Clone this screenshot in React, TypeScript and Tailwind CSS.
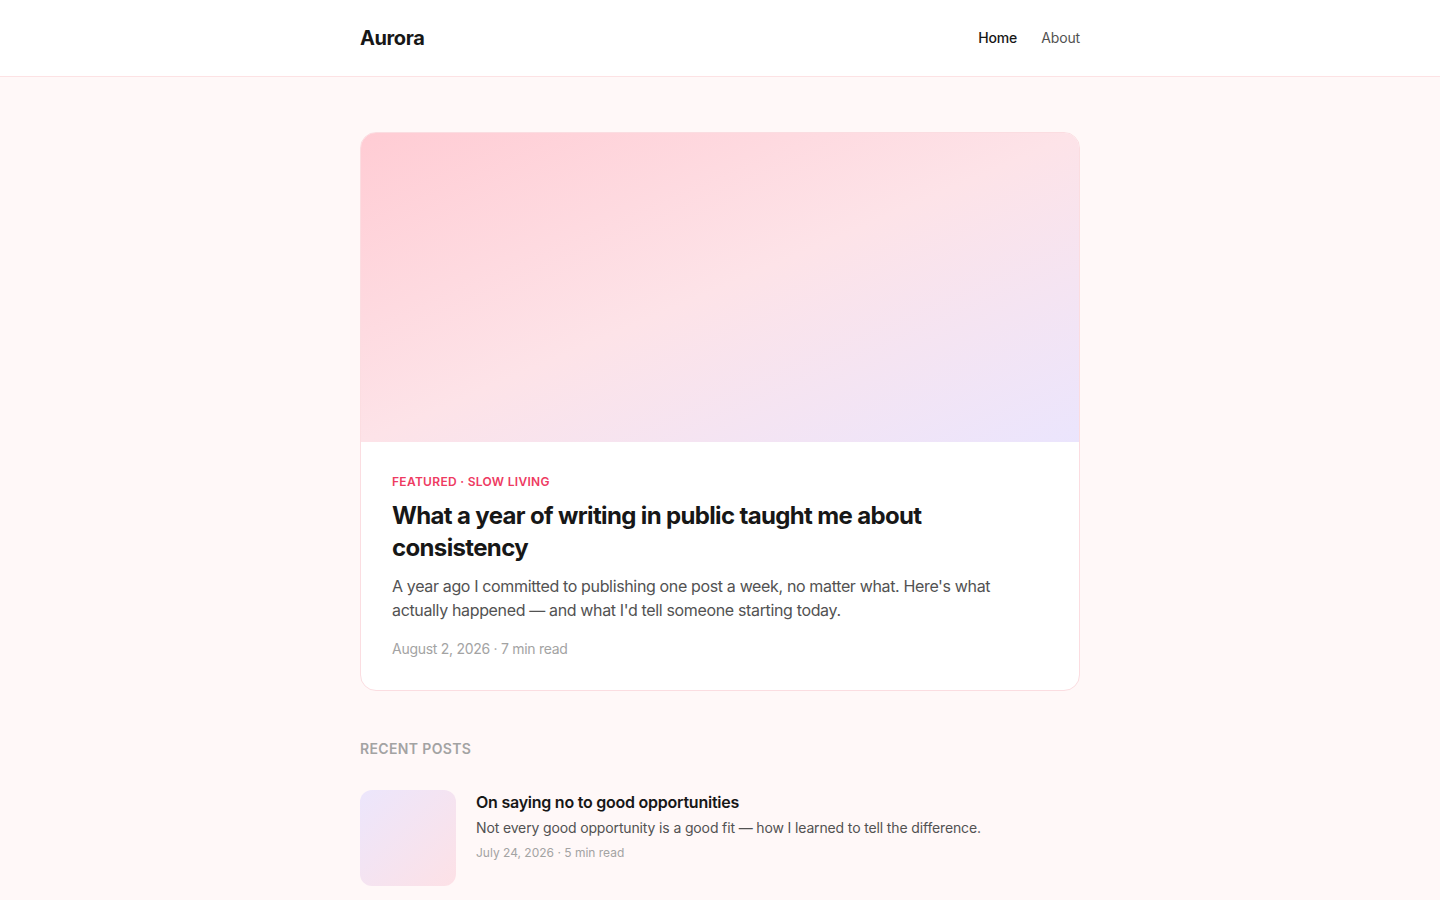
import React from 'react';

const posts = [
  {
    title: 'On saying no to good opportunities',
    excerpt: 'Not every good opportunity is a good fit — how I learned to tell the difference.',
    date: 'July 24, 2026',
    read: '5 min read',
  },
];

export default function App() {
  return (
    <div className="min-h-screen bg-[#fff8f8] text-[#171717]" style={{ fontFamily: 'Inter, "Noto Sans", sans-serif' }}>
      {/* header */}
      <header className="bg-white border-b border-[#fde2e4]">
        <div className="max-w-[720px] mx-auto h-[76px] flex items-center justify-between">
          <span className="text-xl font-bold tracking-[-0.02em] text-[#171717]">Aurora</span>
          <nav className="flex items-center gap-6 text-sm tracking-[-0.01em]">
            <a className="text-[#171717] font-medium">Home</a>
            <a className="text-[#525252]">About</a>
          </nav>
        </div>
      </header>

      <main className="max-w-[720px] mx-auto pt-[55px] pb-16">
        {/* featured */}
        <article className="bg-white border border-[#fbdde1] rounded-2xl overflow-hidden">
          <div className="h-[309px] bg-gradient-to-br from-[#ffccd4] via-[#fde3e8] to-[#ebe5fd]" />
          <div className="px-[31px] pt-8 pb-[31px]">
            <p className="text-xs font-semibold tracking-wide text-[#ee3a62] uppercase">Featured · Slow Living</p>
            <h1 className="mt-2.5 text-2xl leading-8 font-bold tracking-[-0.027em] text-[#171717]">
              What a year of writing in public taught me about consistency
            </h1>
            <p className="mt-2.5 text-base leading-6 tracking-[-0.022em] text-[#525252]">
              A year ago I committed to publishing one post a week, no matter what. Here's what actually happened — and what I'd tell someone starting today.
            </p>
            <p className="mt-[17px] text-sm tracking-[-0.02em] text-[#a3a3a3]">August 2, 2026 · 7 min read</p>
          </div>
        </article>

        {/* recent */}
        <h2 className="mt-12 text-sm font-semibold tracking-wide uppercase text-[#a3a3a3]">Recent Posts</h2>
        <div className="mt-[31px] space-y-8">
          {posts.map(p => (
            <div key={p.title} className="flex gap-5">
              <div className="w-24 h-24 shrink-0 rounded-xl bg-gradient-to-br from-[#ece6fc] to-[#fde1e6]" />
              <div>
                <h3 className="text-base font-semibold tracking-[-0.015em] text-[#171717]">{p.title}</h3>
                <p className="mt-1 text-sm tracking-[-0.01em] text-[#525252]">{p.excerpt}</p>
                <p className="mt-[7px] text-xs text-[#a3a3a3]">{p.date} · {p.read}</p>
              </div>
            </div>
          ))}
        </div>
      </main>
    </div>
  );
}
